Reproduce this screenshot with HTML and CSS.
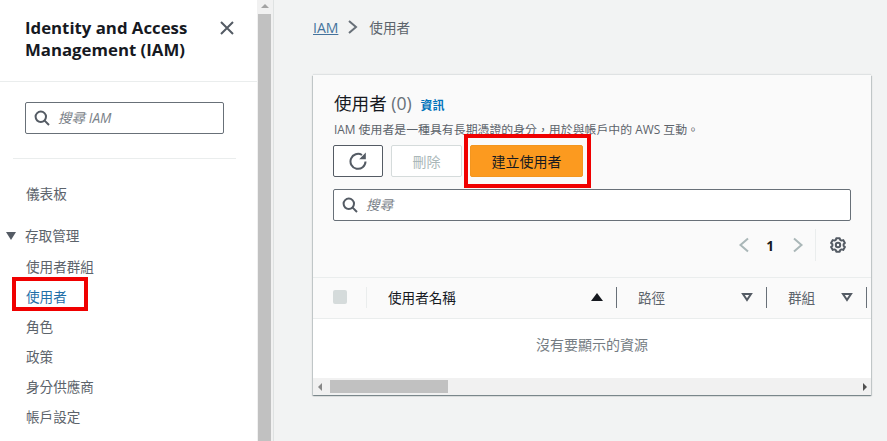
FILE: index.html
```html
<!DOCTYPE html>
<html lang="zh-Hant">
<head>
<meta charset="utf-8">
<title>IAM 使用者</title>
<link rel="stylesheet" href="styles.css">
</head>
<body>
<div class="app">
  <aside class="side">
    <header class="side-head">
      <h2 class="side-title">Identity and Access Management (IAM)</h2>
      <svg class="close" viewBox="0 0 16 16" width="16" height="16"><path d="M2 2l12 12M14 2L2 14"/></svg>
    </header>
    <div class="side-search">
      <div class="input">
        <svg class="mag" viewBox="0 0 16 16" width="16" height="16"><circle cx="6.800" cy="6.800" r="5.200"/><path d="M10.600 10.600L15 15"/></svg>
        <span class="ph">搜尋 IAM</span>
      </div>
    </div>
    <div class="side-rule"></div>
    <nav class="nav">
      <a class="nav-top">儀表板</a>
      <div class="nav-sec"><span class="tri"></span>存取管理</div>
      <a class="nav-item">使用者群組</a>
      <a class="nav-item active">使用者</a>
      <a class="nav-item">角色</a>
      <a class="nav-item">政策</a>
      <a class="nav-item">身分供應商</a>
      <a class="nav-item">帳戶設定</a>
    </nav>
  </aside>
  <div class="vbar"><span class="vbar-up"></span><div class="vbar-thumb"></div></div>
  <main class="main">
    <div class="crumbs">
      <a class="crumb-link">IAM</a>
      <svg class="crumb-sep" viewBox="0 0 12 16" width="12" height="16"><path d="M2 2l7 6-7 6"/></svg>
      <span class="crumb-cur">使用者</span>
    </div>
    <section class="card">
      <div class="card-head">
        <h1 class="card-title">使用者 <span class="count">(0)</span> <a class="info">資訊</a></h1>
        <p class="card-desc">IAM 使用者是一種具有長期憑證的身分，用於與帳戶中的 AWS 互動。</p>
        <div class="actions">
          <button class="btn btn-icon"><svg viewBox="0 0 18 18" width="18" height="18"><path d="M16.500 9.500A7.500 7.500 0 1 1 13 3"/><path class="fill" d="M16.800 .6v6.600h-6.600z"/></svg></button>
          <button class="btn btn-off">刪除</button>
          <button class="btn btn-primary">建立使用者</button>
        </div>
        <div class="input card-search">
          <svg class="mag" viewBox="0 0 16 16" width="16" height="16"><circle cx="6.800" cy="6.800" r="5.200"/><path d="M10.600 10.600L15 15"/></svg>
          <span class="ph">搜尋</span>
        </div>
        <div class="pager">
          <svg class="pg-arrow" viewBox="0 0 12 16" width="12" height="16"><path d="M10 1.500L2.500 8l7.500 6.500"/></svg>
          <span class="pg-num">1</span>
          <svg class="pg-arrow" viewBox="0 0 12 16" width="12" height="16"><path d="M2 1.500L9.500 8 2 14.500"/></svg>
          <span class="pg-rule"></span>
          <svg class="gear" viewBox="0 0 16 16" width="16" height="16"><circle cx="8" cy="8" r="2.200"/><path d="M6.300 1.200h3.400l.5 1.700 1.300.7 1.700-.5 1.700 2.900-1.300 1.200v1.600l1.300 1.200-1.700 2.900-1.700-.5-1.300.7-.5 1.700H6.300l-.5-1.700-1.300-.7-1.700.5-1.700-2.900 1.300-1.200V7.200L1.100 6l1.700-2.900 1.700.5 1.300-.7z"/></svg>
        </div>
      </div>
      <div class="thead">
        <div class="th-check"><span class="check"></span></div>
        <div class="th th-name"><span>使用者名稱</span><span class="sort-up"></span></div>
        <div class="th th-path"><span>路徑</span><svg class="sort" viewBox="0 0 12 10" width="12" height="10"><path d="M2 2h8L6 8z"/></svg></div>
        <div class="th th-group"><span>群組</span><svg class="sort" viewBox="0 0 12 10" width="12" height="10"><path d="M2 2h8L6 8z"/></svg></div>
        <div class="th-end"></div>
      </div>
      <div class="empty">沒有要顯示的資源</div>
      <div class="hbar">
        <span class="hbar-left"></span>
        <div class="hbar-thumb"></div>
        <span class="hbar-right"></span>
      </div>
    </section>
  </main>
</div>
<div class="mark mark-nav"></div>
<div class="mark mark-btn"></div>
</body>
</html>
```
FILE: styles.css
```css
* { box-sizing: border-box; }
html, body { margin: 0; height: 100%; overflow: hidden; }
body {
  font-family: "Open Sans", "Noto Sans CJK TC", sans-serif;
  font-size: 13.6px;
  color: #5c636b;
  position: relative;
}
.app { display: flex; height: 441px; }

/* sidebar */
.side { width: 257px; flex: none; background: #fff; }
.side-head {
  height: 82px;
  border-bottom: 1px solid #eaeded;
  padding: 17px 22px 0 25px;
  display: flex;
  justify-content: space-between;
  align-items: flex-start;
}
.side-title {
  margin: 0;
  width: 185px;
  font-size: 16.800px;
  line-height: 22px;
  font-weight: 700;
  color: #16191f;
}
.close { margin-top: 3px; fill: none; stroke: #545b64; stroke-width: 2; }
.side-search { padding: 20px 33px 0 25px; }
.input {
  display: flex;
  align-items: center;
  gap: 8px;
  height: 32px;
  border: 1px solid #687078;
  border-radius: 2px;
  background: #fff;
  padding-left: 8px;
}
.mag { flex: none; fill: none; stroke: #545b64; stroke-width: 2; }
.ph { font-style: italic; color: #7b8289; font-size: 13.6px; position: relative; top: -1px; }
.side-rule { margin: 24px 21px 0 13px; border-top: 1px solid #eaeded; }
.nav { display: flex; flex-direction: column; padding: 0 0 0 26px; }
.nav a { display: block; line-height: 30px; height: 30px; }
.nav-top { margin-top: 20px; }
.nav-sec {
  margin: 12px 0 1px -20px;
  height: 30px;
  line-height: 30px;
  display: flex;
  align-items: center;
}
.tri {
  width: 0;
  height: 0;
  border-left: 5px solid transparent;
  border-right: 5px solid transparent;
  border-top: 8px solid #545b64;
  margin-right: 9px;
}
.nav-item.active { color: #1f6fa8; }

/* page scrollbar */
.vbar { width: 17px; flex: none; background: #f1f1f1; position: relative; padding: 14px 2px 0 1px; border-right: 1px solid #dfe2e2; }
.vbar-up {
  position: absolute;
  left: 4px;
  top: 4px;
  border-left: 4px solid transparent;
  border-right: 4px solid transparent;
  border-bottom: 4px solid #a3a3a3;
}
.vbar-thumb { height: 100%; background: #c1c1c1; }

/* main */
.main { flex: 1; background: #f2f3f3; padding: 17px 16px 0 39px; min-width: 0; }
.crumbs { display: flex; align-items: center; height: 20px; }
.crumb-link { color: #44729c; text-decoration: underline; font-size: 14px; }
.crumb-sep { margin: 0 10px 0 9px; fill: none; stroke: #687078; stroke-width: 2; }

.card {
  margin-top: 38px;
  height: 320px;
  background: #fff;
  box-shadow: 0 1px 1px 0 rgba(0,28,36,.3), 1px 1px 1px 0 rgba(0,28,36,.15), -1px 1px 1px 0 rgba(0,28,36,.15), 0 -1px 1px 0 rgba(0,28,36,.08);
  display: flex;
  flex-direction: column;
}
.card-head { background: #fafafa; padding: 17px 20px 0 21px; height: 203px; border-bottom: 1px solid #eaeded; }
.card-title { margin: 0; font-size: 17.600px; font-weight: 400; line-height: 22px; color: #16191f; }
.count { color: #687078; }
.info { font-size: 12px; font-weight: 700; color: #0073bb; margin-left: 4px; }
.card-desc { margin: 4px 0 0; font-size: 11.900px; line-height: 16px; white-space: nowrap; }
.actions { display: flex; gap: 8px; margin: 8px 0 0 -1px; }
.btn {
  height: 32px;
  border-radius: 2px;
  font: inherit;
  font-size: 14px;
  padding: 0;
}
.btn-icon { width: 50px; background: #fff; border: 1px solid #545b64; display: flex; align-items: center; justify-content: center; }
.btn-icon svg { fill: none; stroke: #545b64; stroke-width: 2; }
.btn-icon .fill { fill: #545b64; stroke: none; }
.btn-off { width: 71px; background: #fff; border: 1px solid #d5dbdb; color: #aab7b8; }
.btn-primary { width: 113px; background: #fc9a1f; border: 1px solid #f3961f; color: #16191f; }
.card-search { margin: 12px 0 0 -1px; height: 32px; }
.pager { display: flex; align-items: center; justify-content: flex-end; margin-top: 8px; height: 32px; padding-right: 5px; }
.pg-arrow { fill: none; stroke: #aab7b8; stroke-width: 2; }
.pg-num { font-weight: 700; color: #16191f; font-size: 13.6px; margin: 0 18px 0 16px; }
.pg-rule { width: 1px; height: 32px; background: #eaeded; margin: 0 14px 0 11px; }
.gear { fill: none; stroke: #545b64; stroke-width: 2; stroke-linejoin: round; }

/* table header */
.thead { display: flex; align-items: center; height: 41px; background: #fafafa; border-bottom: 1px solid #eaeded; padding-bottom: 2px; }
.th-check { width: 54px; height: 21px; border-right: 1px solid #eaeded; display: flex; align-items: center; padding-left: 20px; flex: none; }
.check { width: 14px; height: 14px; border-radius: 2px; background: #d5dbdb; }
.th { display: flex; align-items: center; justify-content: space-between; height: 21px; flex: none; border-right: 1px solid #687078; }
.th-name { width: 250px; padding: 0 13px 0 21px; color: #16191f; }
.th-path { width: 150px; padding: 0 13px 0 21px; }
.th-group { width: 100px; padding: 0 13px 0 21px; }
.sort-up {
  width: 0; height: 0;
  border-left: 6px solid transparent;
  border-right: 6px solid transparent;
  border-bottom: 8px solid #16191f;
}
.sort { fill: none; stroke: #545b64; stroke-width: 2; }
.th-end { flex: 1; }
.empty { flex: 1; background: #fff; display: flex; align-items: center; justify-content: center; color: #757c83; font-size: 14px; padding-bottom: 9px; }

/* inner scrollbar */
.hbar { height: 17px; background: #f1f1f1; display: flex; align-items: center; }
.hbar-left { width: 0; height: 0; border-top: 4px solid transparent; border-bottom: 4px solid transparent; border-right: 4px solid #888; margin: 0 8px 0 5px; }
.hbar-thumb { width: 118px; height: 13px; background: #c1c1c1; }
.hbar-right { width: 0; height: 0; border-top: 4px solid transparent; border-bottom: 4px solid transparent; border-left: 4px solid #505050; margin-left: auto; margin-right: 4px; }

/* red annotations */
.mark { position: absolute; border: 4px solid #f00000; }
.mark-nav { left: 12px; top: 277px; width: 76px; height: 34px; }
.mark-btn { left: 464px; top: 134px; width: 127px; height: 54px; }
```
